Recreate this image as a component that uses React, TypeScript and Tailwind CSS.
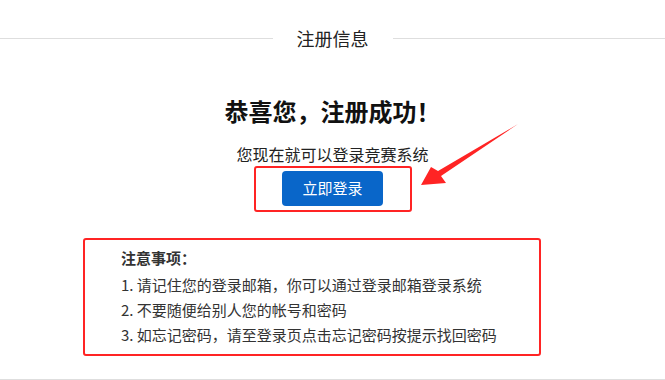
export default function App() {
  const notes = [
    "1. 请记住您的登录邮箱，你可以通过登录邮箱登录系统",
    "2. 不要随便给别人您的帐号和密码",
    "3. 如忘记密码，请至登录页点击忘记密码按提示找回密码",
  ];

  return (
    <div className="relative w-[665px] h-[380px] overflow-hidden bg-white border-b border-[#dedede] font-['Noto_Sans_CJK_SC','Noto_Sans',sans-serif]">
      {/* section header */}
      <div className="flex items-center pt-[28px]">
        <div className="h-px flex-1 bg-[#dedede]" />
        <span className="px-6 text-[18px] leading-[20px] text-[#222]">注册信息</span>
        <div className="h-px flex-1 bg-[#dedede]" />
      </div>

      <div className="flex flex-col items-center">
        <h1 className="mt-[47px] text-[24px] leading-[32px] font-bold text-[#111]">恭喜您，注册成功！</h1>
        <p className="mt-[15px] text-[16px] leading-[24px] text-[#222]">您现在就可以登录竞赛系统</p>
        <span className="relative mt-[5px]">
          <button className="w-[101px] h-[35px] rounded-[4px] bg-[#0966c9] text-white text-[15px]">
            立即登录
          </button>
          <span className="absolute left-[-28px] right-[-29px] top-[-5px] bottom-[-6px] rounded-[3px] border-2 border-[#ff2424] pointer-events-none" />
        </span>
      </div>

      <div className="ml-[83px] mt-[32px] w-[458px] h-[118px] rounded-[3px] border-2 border-[#ff2424] pl-[36px] pt-[5px] text-[15px] leading-[25px] text-[#333]">
        <div className="font-bold mb-[2px]">注意事项：</div>
        {notes.map((n) => (
          <div key={n}>{n}</div>
        ))}
      </div>

      {/* annotation arrow */}
      <svg className="absolute left-0 top-0 pointer-events-none" width="665" height="380" viewBox="0 0 665 380">
        <polygon
          points="518,124 438,171 431,167 421,185 446,183 441,176"
          fill="#ff2424"
        />
      </svg>
    </div>
  );
}
